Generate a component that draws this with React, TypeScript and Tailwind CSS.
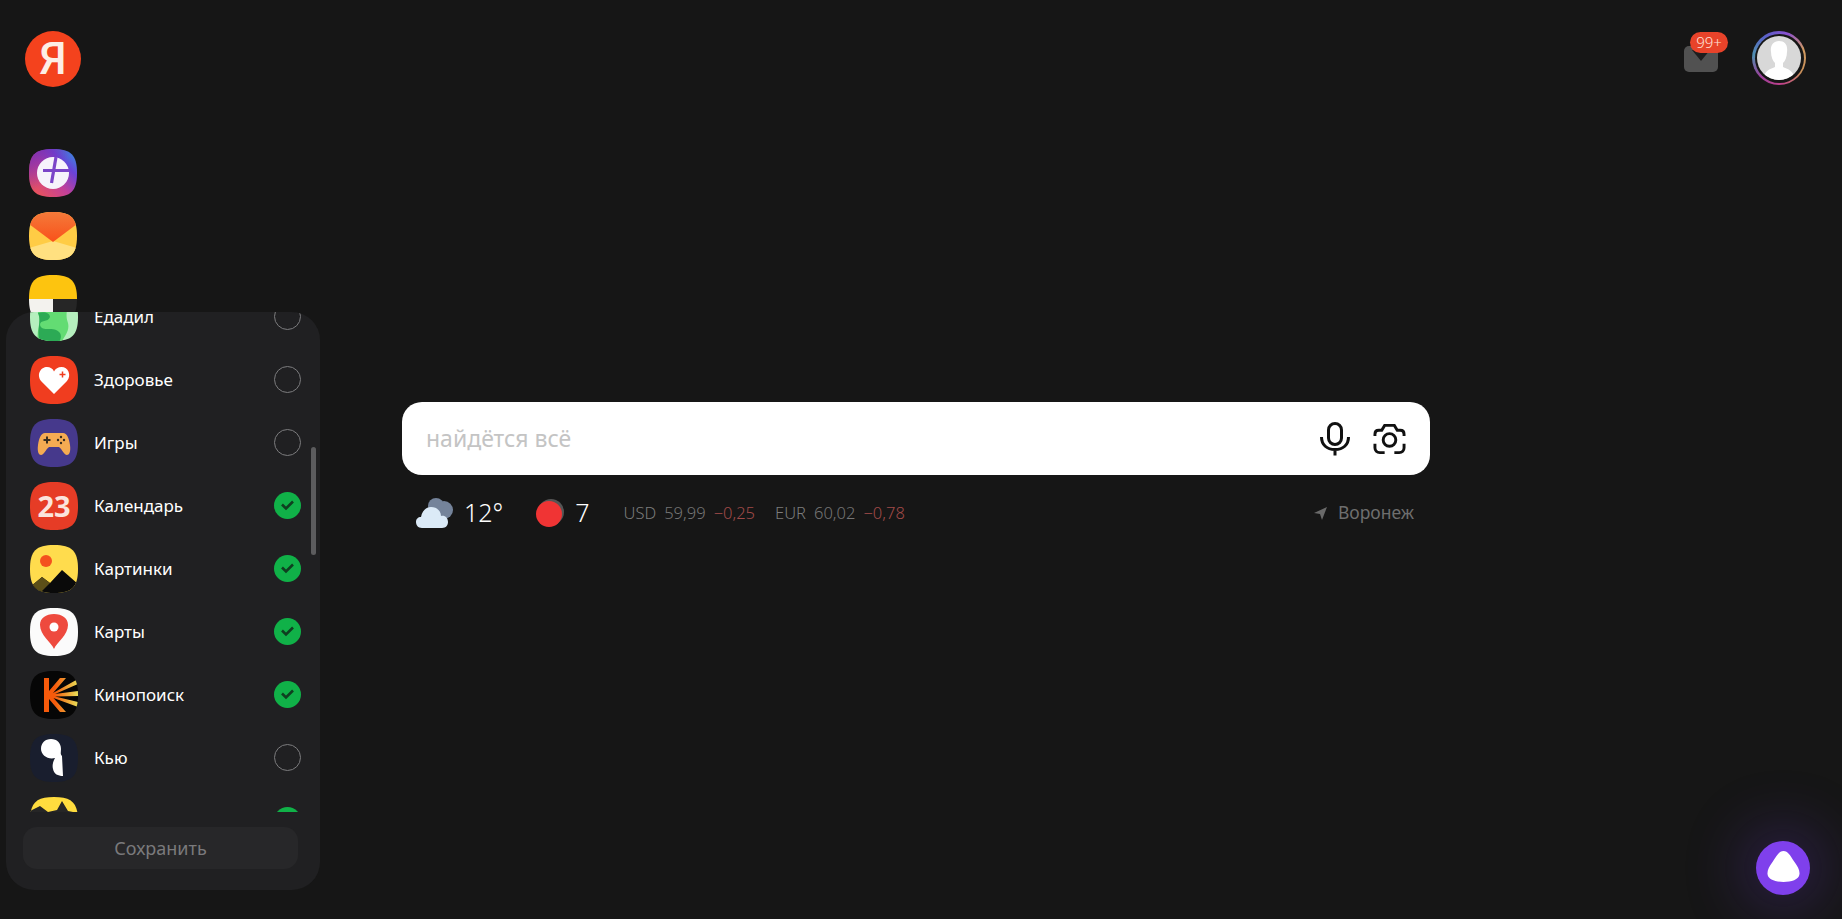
import React from "react";

const SQ = "M24 0C42 0 48 6 48 24C48 42 42 48 24 48C6 48 0 42 0 24C0 6 6 0 24 0Z";

function Squircle({ id, children }: { id: string; children: React.ReactNode }) {
  return (
    <svg width="48" height="48" viewBox="0 0 48 48" className="block shrink-0">
      <defs>
        <clipPath id={`clip-${id}`}>
          <path d={SQ} />
        </clipPath>
      </defs>
      <g clipPath={`url(#clip-${id})`}>{children}</g>
    </svg>
  );
}

const PlusIcon = () => (
  <Squircle id="plus">
    <defs>
      <linearGradient id="pg" x1="0" y1="1" x2="1" y2="0">
        <stop offset="0" stopColor="#f5584a" />
        <stop offset="0.45" stopColor="#c2409a" />
        <stop offset="0.72" stopColor="#6a42d8" />
        <stop offset="1" stopColor="#2a9fe0" />
      </linearGradient>
      <linearGradient id="pg2" x1="0" y1="0" x2="1" y2="1">
        <stop offset="0" stopColor="#7b2fb0" stopOpacity="1" />
        <stop offset="0.5" stopColor="#7b2fb0" stopOpacity="0" />
      </linearGradient>
    </defs>
    <rect width="48" height="48" fill="url(#pg)" />
    <rect width="48" height="48" fill="url(#pg2)" />
    <circle cx="24" cy="24" r="16" fill="#f6f3fb" />
    <path d="M14 21.5H40" stroke="#7b45c8" strokeWidth="3.2" />
    <path d="M27 8L22.5 34" stroke="#7b45c8" strokeWidth="3.2" />
  </Squircle>
);

const MailColor = () => (
  <Squircle id="mail">
    <defs>
      <linearGradient id="mg" x1="0" y1="0" x2="0" y2="1">
        <stop offset="0" stopColor="#f47a3a" />
        <stop offset="1" stopColor="#f9511a" />
      </linearGradient>
    </defs>
    <rect width="48" height="48" fill="#ffcc45" />
    <path d="M0 36L24 29L48 36V48H0Z" fill="#ffe080" />
    <path d="M0 0H48V12L24 30L0 12Z" fill="url(#mg)" />
  </Squircle>
);

const NotesIcon = () => (
  <Squircle id="notes">
    <rect width="48" height="24" fill="#fdc40f" />
    <rect y="24" width="24" height="24" fill="#f3f2ee" />
    <rect x="24" y="24" width="24" height="24" fill="#262626" />
  </Squircle>
);

const EdadilIcon = () => (
  <Squircle id="edadil">
    <rect width="48" height="48" fill="#b5efbe" />
    <path d="M6 0H36C40 14 34 20 38 30C40 38 34 44 32 48H8C6 36 12 30 8 20Z" fill="#63dc73" />
    <path d="M8 20C14 18 20 20 20 24C18 30 10 26 10 32C12 40 24 32 30 40C32 44 30 46 30 48H10C6 38 12 28 8 20Z" fill="#2caa55" />
  </Squircle>
);

const HealthIcon = () => (
  <Squircle id="health">
    <rect width="48" height="48" fill="#f03d1f" />
    <path d="M24 38L11 25C6 18 11 11 17 11C20 11 23 12.5 24 15.5C25.5 12.5 28 11 31.5 11C38 11 42 19 37 25Z" fill="#fff" />
    <path d="M29.5 18.5H35.5M32.5 15.5V21.5" stroke="#f03d1f" strokeWidth="1.5" />
  </Squircle>
);

const GamesIcon = () => (
  <Squircle id="games">
    <rect width="48" height="48" fill="#46398c" />
    <path d="M15 14H33C37 14 39 19 40 26C41 33 39 36 37 36C34 36 32 30 29 28H19C16 30 14 36 11 36C9 36 7 33 8 26C9 19 11 14 15 14Z" fill="#f5ab52" />
    <path d="M13.5 21H20.5M17 17.5V24.5" stroke="#3a2e1f" strokeWidth="2" />
    <circle cx="31" cy="18" r="1.2" fill="#3a2e1f" />
    <circle cx="31" cy="24" r="1.2" fill="#3a2e1f" />
    <circle cx="28" cy="21" r="1.2" fill="#3a2e1f" />
    <circle cx="34" cy="21" r="1.2" fill="#3a2e1f" />
  </Squircle>
);

const CalendarIcon = () => (
  <Squircle id="calendar">
    <rect width="48" height="48" fill="#e63c26" />
    <text x="24" y="35" textAnchor="middle" fontFamily="'Open Sans', 'Liberation Sans', sans-serif" fontWeight="700" fontSize="29" fill="#fbe4dd">23</text>
  </Squircle>
);

const PicturesIcon = () => (
  <Squircle id="pictures">
    <rect width="48" height="48" fill="#ffdc4d" />
    <circle cx="16" cy="16" r="6" fill="#f4511e" />
    <path d="M0 42L12 32L20 38L32 25L48 39V48H0Z" fill="#0a0a0a" />
    <path d="M0 42L12 32L20 38L10 48H0Z" fill="#5c4f18" />
  </Squircle>
);

const MapsIcon = () => (
  <Squircle id="maps">
    <rect width="48" height="48" fill="#fbfbfb" />
    <path d="M24 41C21 34 10 27 10 17C10 10 16 6 24 6C32 6 38 10 38 17C38 27 27 34 24 41Z" fill="#ee4a3e" />
    <circle cx="24" cy="19" r="4.5" fill="#fff" />
  </Squircle>
);

const KinoIcon = () => (
  <Squircle id="kino">
    <defs>
      <linearGradient id="kg" x1="0" y1="0" x2="1" y2="0">
        <stop offset="0.2" stopColor="#f65a0b" />
        <stop offset="1" stopColor="#e8de58" />
      </linearGradient>
    </defs>
    <rect width="48" height="48" fill="#060606" />
    <path d="M14 7H19V41H14Z" fill="#f65a0b" />
    <path d="M19 20L30 7H36L23 22L48 8V13L25 23L48 20V25L25 25.5L48 31V36L23.5 27L36 41H30L19 28Z" fill="url(#kg)" />
  </Squircle>
);

const QIcon = () => (
  <Squircle id="q">
    <rect width="48" height="48" fill="#191e2e" />
    <path d="M21 5C27 5 31 9 31 15C31 18 30 20 32 22L33 42C28 42 24 40 23 35C22 31 23 28 25 24C18 26 11 21 11 15C11 9 15 5 21 5Z" fill="#fff" />
  </Squircle>
);

const LavkaIcon = () => (
  <Squircle id="lavka">
    <rect width="48" height="48" fill="#ffdc3e" />
    <path d="M0 14L10 9L18 15L27 13L32 4L38 14L48 16V48H0Z" fill="#262626" />
  </Squircle>
);

function Check({ on }: { on: boolean }) {
  if (!on) return <div className="w-[27px] h-[27px] rounded-full border border-[#7c7c7e] shrink-0 -mt-[2px]" />;
  return (
    <div className="w-[27px] h-[27px] rounded-full bg-[#10b148] flex items-center justify-center shrink-0 -mt-[2px]">
      <svg width="15" height="12" viewBox="0 0 15 12" fill="none">
        <path d="M2 5.5L6 9.5L13 2.5" stroke="#0f3f20" strokeWidth="2.6" />
      </svg>
    </div>
  );
}

const rows: { name: string; icon: React.ReactNode; on: boolean }[] = [
  { name: "Едадил", icon: <EdadilIcon />, on: false },
  { name: "Здоровье", icon: <HealthIcon />, on: false },
  { name: "Игры", icon: <GamesIcon />, on: false },
  { name: "Календарь", icon: <CalendarIcon />, on: true },
  { name: "Картинки", icon: <PicturesIcon />, on: true },
  { name: "Карты", icon: <MapsIcon />, on: true },
  { name: "Кинопоиск", icon: <KinoIcon />, on: true },
  { name: "Кью", icon: <QIcon />, on: false },
  { name: "", icon: <LavkaIcon />, on: true },
];

function SettingsPanel() {
  return (
    <div className="absolute left-[6px] top-[312px] w-[314px] h-[578px] rounded-[28px] bg-[#202022] z-10 overflow-hidden">
      <div className="relative h-[500px] overflow-hidden">
        <div className="flex flex-col gap-[15px] -mt-[19px] pl-[24px] pr-[19px]">
          {rows.map((r, i) => (
            <div key={i} className="flex items-center h-[48px]">
              {r.icon}
              <span className="ml-[16px] flex-1 text-[17px] text-white -mt-[1px]">{r.name}</span>
              <Check on={r.on} />
            </div>
          ))}
        </div>
        <div className="absolute right-[4px] top-[135px] w-[5px] h-[108px] rounded-full bg-[#5c5c5e]" />
      </div>
      <div className="mt-[15px] mx-[17px] h-[42px] w-[275px] rounded-[14px] bg-[#272729] flex items-center justify-center text-[#7a7a7c] text-[18px]">
        Сохранить
      </div>
    </div>
  );
}

function Exchange({ code, value, delta }: { code: string; value: string; delta: string }) {
  return (
    <div className="flex items-center gap-[8px] text-[16.5px] font-light">
      <span className="text-[#7c7c7c]">{code}</span>
      <span className="text-[#747474]">{value}</span>
      <span className="text-[#a04a48]">{delta}</span>
    </div>
  );
}

export default function App() {
  return (
    <div
      className="relative h-[919px] overflow-hidden bg-[#161616]"
      style={{ fontFamily: "'Noto Sans', 'Open Sans', 'Liberation Sans', sans-serif" }}
    >
      <SettingsPanel />

      <div className="flex justify-between items-start pl-[25px] pr-[36px] pt-[31px]">
        <div className="flex flex-col">
          <div className="w-[56px] h-[56px] rounded-full bg-[#f4421d] flex items-center justify-center">
            <span className="text-[#fdeee6] text-[44px] font-medium leading-none" style={{ fontFamily: "Roboto, sans-serif" }}>Я</span>
          </div>
          <div className="flex flex-col gap-[15px] mt-[62px] pl-[4px]">
            <PlusIcon />
            <MailColor />
            <NotesIcon />
          </div>
        </div>

        <div className="flex items-center gap-[34px]">
          <div className="relative w-[34px] h-[26px] mt-[1px]">
            <svg width="34" height="26" viewBox="0 0 34 26">
              <rect width="34" height="26" rx="5" fill="#515151" />
              <path d="M8 4L17 15L26 4Z" fill="#1e1e1e" />
            </svg>
            <div className="absolute left-[6px] -top-[14px] w-[38px] h-[21px] rounded-full bg-[#e8432a] text-[#ffe4db] text-[15px] font-light leading-[21px] text-center">
              99+
            </div>
          </div>
          <div className="w-[54px] h-[54px] rounded-full flex items-center justify-center bg-[conic-gradient(from_20deg,#8a4fd0,#d09a60,#c8905a,#c0408a,#9a3f9a,#4f8fb0,#5a60c8,#8a4fd0)]">
            <div className="w-[49px] h-[49px] rounded-full bg-[#161616] flex items-center justify-center">
              <svg width="44" height="44" viewBox="0 0 44 44">
                <defs>
                  <clipPath id="av"><circle cx="22" cy="22" r="22" /></clipPath>
                </defs>
                <g clipPath="url(#av)">
                  <rect width="44" height="44" fill="#d8d8d8" />
                  <path d="M22 5C28 5 31 9 30 16C30 21 28 25 26 27V31C30 33 37 34 38 44H6C7 34 14 33 18 31V27C16 25 14 21 14 16C13 10 16 5 22 5Z" fill="#fff" />
                </g>
              </svg>
            </div>
          </div>
        </div>
      </div>

      <div className="absolute left-[402px] top-[402px] w-[1028px]">
        <div className="h-[73px] rounded-[20px] bg-white flex items-center pl-[24px] pr-[24px]">
          <span className="flex-1 text-[#c4c4c4] text-[23px] -mt-[1px]">найдётся всё</span>
          <svg width="30" height="34" viewBox="0 0 30 34" fill="none" stroke="#111" strokeWidth="3">
            <rect x="8.5" y="1.5" width="13" height="21" rx="6.5" />
            <path d="M1.5 15C1.5 23 7 27.5 15 27.5C23 27.5 28.5 23 28.5 15M15 27.5V33.5" />
          </svg>
          <svg className="ml-[23px]" width="33" height="32" viewBox="0 0 34 32" fill="none" stroke="#111" strokeWidth="3">
            <circle cx="17" cy="17" r="6.5" />
            <path d="M2 13V11C2 8 4 7 6 7H9L12 2H22L25 7H28C30 7 32 8 32 11V13" />
            <path d="M2 21V25C2 28 4 30 7 30H12M22 30H27C30 30 32 28 32 25V21" />
          </svg>
        </div>

        <div className="flex items-center mt-[19px] h-[38px] pl-[14px] pr-[16px]">
          <svg width="38" height="32" viewBox="0 0 38 32">
            <circle cx="28" cy="13" r="9" fill="#74839a" />
            <circle cx="20" cy="9" r="8" fill="#74839a" />
            <path d="M6 31C2 31 0 28 0 25C0 22 2 20 5 20C6 14 10 10 15 10C21 10 25 14 25 19C29 18 32 21 32 25C32 28 30 31 26 31Z" fill="#dbeaf7" />
          </svg>
          <span className="ml-[10px] text-white text-[25px] font-light">12°</span>
          <svg className="ml-[32px]" width="30" height="30" viewBox="0 0 30 30">
            <circle cx="16" cy="14" r="13" fill="#555" />
            <circle cx="14" cy="16" r="13" fill="#f03434" />
          </svg>
          <span className="ml-[10px] text-white text-[25px] font-light">7</span>
          <div className="ml-[34px]">
            <Exchange code="USD" value="59,99" delta="−0,25" />
          </div>
          <div className="ml-[20px]">
            <Exchange code="EUR" value="60,02" delta="−0,78" />
          </div>
          <div className="flex-1" />
          <svg width="13" height="13" viewBox="0 0 13 13">
            <path d="M13 0L8 13L6 7L0 6Z" fill="#6a6a6a" />
          </svg>
          <span className="ml-[11px] text-[#6e6e6e] text-[17.5px] -mt-[1px]">Воронеж</span>
        </div>
      </div>

      <div className="absolute left-[1756px] top-[841px] w-[54px] h-[54px] rounded-full bg-[#7f40ec] shadow-[0_0_60px_14px_rgba(110,60,220,0.25)] flex items-center justify-center">
        <svg className="-mt-[3px]" width="33" height="31" viewBox="0 0 30 28">
          <path d="M15 0C19 0 21 4 25 10C28 14 30 18 29.5 21C29 26 22 28 15 28C8 28 1 26 .5 21C0 18 2 14 5 10C9 4 11 0 15 0Z" fill="#fff" />
        </svg>
      </div>
    </div>
  );
}
